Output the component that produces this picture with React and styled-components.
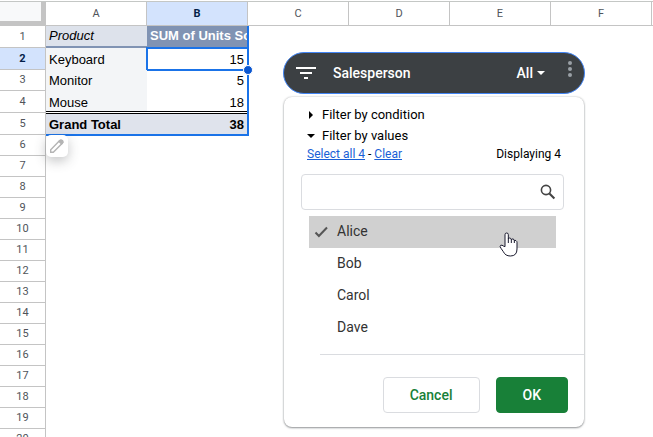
import React, { useState } from 'react';
import styled, { createGlobalStyle } from 'styled-components';

const GlobalStyle = createGlobalStyle`
  * {
    box-sizing: border-box;
  }
  body {
    margin: 0;
    background: #fff;
    font-family: Roboto, "Liberation Sans", sans-serif;
  }
  button, input {
    font-family: inherit;
  }
`;

const Page = styled.main`
  position: relative;
  height: 100vh;
  overflow: hidden;
`;

const Sheet = styled.table`
  width: 100%;
  margin-top: 1px;
  border-top: 1px solid #c4c7c5;
  border-collapse: separate;
  border-spacing: 0;
  table-layout: fixed;
  font-family: "Liberation Sans", Arial, sans-serif;
  font-size: 13px;
  line-height: 16px;
`;

const HeadCol = styled.col`
  width: 46px;
`;
const DataCol = styled.col`
  width: 101px;
`;

const Corner = styled.td`
  height: 23px;
  padding: 0;
  background: #f8f9fa;
  border-right: 5px solid #c4c4c4;
  border-bottom: 5px solid #c4c4c4;
`;

const HeadCell = styled.th`
  padding: 0;
  border-right: 1px solid #c4c4c4;
  border-bottom: 1px solid #c4c4c4;
  background: ${({ $active }) => $active ? '#d3e3fd' : '#fff'};
  color: ${({ $active }) => $active ? '#041e49' : '#50545a'};
  font-family: Roboto, sans-serif;
  font-size: 11px;
  font-weight: ${({ $active }) => $active ? 700 : 400};
`;
const ColumnHead = styled(HeadCell)`
  height: 24px;

  &:last-child {
    border-right: 0;
  }
`;
const RowHead = styled(HeadCell)`
  height: ${({ $height }) => $height}px;
`;

const Cell = styled.td`
  position: relative;
  padding: 0 4px 2px 3px;
  white-space: nowrap;
  vertical-align: bottom;
  color: #000;
`;

const FieldCell = styled(Cell)`
  padding-bottom: 4px;
  background: #dde2eb;
  font-style: italic;

  &::after {
    content: '';
    position: absolute;
    left: 0;
    right: 0;
    bottom: -1px;
    height: 3px;
    background: #8093b3;
  }
`;
const MeasureCell = styled(Cell)`
  padding-bottom: 4px;
  background: #8093b3;
  color: #fff;
  font-weight: 700;
  overflow: hidden;
`;
const LabelCell = styled(Cell)`
  background: #f3f5f7;
`;
const ValueCell = styled(Cell)`
  text-align: right;
`;
const TotalCell = styled(Cell)`
  background: #dfe3ec;
  font-weight: 700;
  text-align: ${({ $right }) => $right ? 'right' : 'left'};

  &::before {
    content: '';
    position: absolute;
    left: 0;
    right: 0;
    top: -2px;
    border-top: 3px double #000;
    background: #fff;
  }
`;

const RangeOutline = styled.span`
  position: absolute;
  top: 26px;
  left: 46px;
  width: 203px;
  height: 110px;
  border: solid #1a73e8;
  border-width: 0 2px 2px 0;
  pointer-events: none;
`;
const ActiveOutline = styled.span`
  position: absolute;
  inset: -1px;
  border: 2px solid #1a73e8;
  border-right: 0;
`;
const FillHandle = styled.span`
  position: absolute;
  top: 65px;
  left: 243px;
  width: 10px;
  height: 10px;
  border: 1px solid #fff;
  border-radius: 50%;
  background: #0b57d0;
`;

const EditButton = styled.button`
  position: absolute;
  top: 135px;
  left: 46px;
  width: 22px;
  height: 22px;
  padding: 3px;
  border: 0;
  border-radius: 5px;
  background: #fff;
  box-shadow: 0 4px 12px rgba(60, 64, 67, 0.3);

  svg {
    display: block;
  }
`;

const Slicer = styled.section`
  position: absolute;
  top: 52px;
  left: 283px;
  width: 302px;
  display: flex;
  flex-direction: column;
  gap: 3px;
`;

const SlicerBar = styled.header`
  display: flex;
  align-items: center;
  height: 42px;
  padding: 0 9px 0 12px;
  border: 1px solid #4285f4;
  border-radius: 21px;
  background: #3c4043;
  color: #fff;
  font-size: 14px;
`;
const SlicerTitle = styled.h2`
  flex: 1;
  margin: 0 0 0 17px;
  font-size: 14px;
  font-weight: 500;
  line-height: 20px;
`;
const BarButton = styled.button`
  display: flex;
  align-items: center;
  gap: 4px;
  padding: 0;
  border: 0;
  background: none;
  color: #fff;
  font-size: 14px;
  font-weight: 500;
  line-height: 20px;
`;
const MoreButton = styled(BarButton)`
  align-self: flex-start;
  margin: 7px 0 0 20px;
`;

const Panel = styled.div`
  margin: 0 1px;
  padding: 7px 0 14px;
  border-radius: 8px;
  background: #fff;
  box-shadow: 0 1px 2px rgba(60, 64, 67, 0.5), 0 0 2px rgba(60, 64, 67, 0.3);
`;

const Disclosure = styled.button`
  display: flex;
  align-items: center;
  gap: 7px;
  height: 21px;
  padding: 0 0 0 23px;
  border: 0;
  background: none;
  color: #000;
  font-size: 13px;
  line-height: 20px;
`;

const ValuesHead = styled.div`
  display: flex;
  justify-content: space-between;
  padding: 0 23px;
  color: #000;
  font-size: 12px;
  line-height: 16px;

  a {
    color: #1a5fd6;
  }
`;

const SearchBox = styled.label`
  display: flex;
  align-items: center;
  height: 36px;
  margin: 12px 20px 6px 17px;
  padding: 0 7px;
  border: 1px solid #dadce0;
  border-radius: 4px;

  input {
    flex: 1;
    min-width: 0;
    border: 0;
    outline: 0;
    font-size: 14px;
  }
`;

const ValueList = styled.ul`
  margin: 0 28px 0 25px;
  padding: 0;
  list-style: none;
`;
const ValueItem = styled.label`
  display: flex;
  align-items: center;
  gap: 8px;
  height: 32px;
  padding: 0 4px 2px;
  background: ${({ $hovered }) => $hovered ? '#d0d0d0' : 'transparent'};
  color: #333;
  font-size: 14px;
  line-height: 20px;

  input {
    position: absolute;
    opacity: 0;
  }
  svg {
    visibility: ${({ $marked }) => $marked ? 'visible' : 'hidden'};
  }
`;

const Actions = styled.footer`
  display: flex;
  justify-content: flex-end;
  gap: 16px;
  margin: 10px 0 0 36px;
  padding: 22px 16px 0 0;
  border-top: 1px solid #dadce0;
`;
const ActionButton = styled.button`
  height: 36px;
  padding: 0 26px;
  border: 1px solid ${({ $primary }) => $primary ? '#188038' : '#dadce0'};
  border-radius: 4px;
  background: ${({ $primary }) => $primary ? '#188038' : '#fff'};
  color: ${({ $primary }) => $primary ? '#fff' : '#188038'};
  font-size: 14px;
  font-weight: 500;
`;

const Pointer = styled.svg`
  position: absolute;
  top: 232px;
  left: 499px;
  pointer-events: none;
`;

const columns = ['A', 'B', 'C', 'D', 'E', 'F', ''];
const rowHeights = [22, 22, 21, 22, 22];
const products = [
  { name: 'Keyboard', units: 15 },
  { name: 'Monitor', units: 5 },
  { name: 'Mouse', units: 18 }
];
const people = ['Alice', 'Bob', 'Carol', 'Dave'];

function SheetRow ({ number, children }) {
  return (
    <tr>
      <RowHead scope='row' $height={rowHeights[number - 1] || 21} $active={number === 2}>
        {number}
      </RowHead>
      {children}
    </tr>
  );
}

function PivotSheet () {
  const total = products.reduce((sum, p) => sum + p.units, 0);
  const emptyRows = Array.from({ length: 15 }, (_, i) => i + 6);

  return (
    <Sheet>
      <colgroup>
        <HeadCol />
        {columns.slice(0, -1).map(c => <DataCol key={c} />)}
        <col />
      </colgroup>
      <thead>
        <tr>
          <Corner />
          {columns.map(c => (
            <ColumnHead key={c} scope='col' $active={c === 'B'}>{c}</ColumnHead>
          ))}
        </tr>
      </thead>
      <tbody>
        <SheetRow number={1}>
          <FieldCell>Product</FieldCell>
          <MeasureCell>SUM of Units Sold</MeasureCell>
        </SheetRow>
        {products.map((p, i) => (
          <SheetRow key={p.name} number={i + 2}>
            <LabelCell>{p.name}</LabelCell>
            <ValueCell>
              {p.units}
              {i === 0 && <ActiveOutline />}
            </ValueCell>
          </SheetRow>
        ))}
        <SheetRow number={5}>
          <TotalCell>Grand Total</TotalCell>
          <TotalCell $right>{total}</TotalCell>
        </SheetRow>
        {emptyRows.map(n => <SheetRow key={n} number={n} />)}
      </tbody>
    </Sheet>
  );
}

function FilterSlicer () {
  const [selected, setSelected] = useState(['Alice']);

  const toggle = (name) => {
    setSelected(selected.includes(name)
      ? selected.filter(s => s !== name)
      : [...selected, name]);
  };

  return (
    <Slicer>
      <SlicerBar>
        <svg width='20' height='14' viewBox='0 0 20 14' fill='#fff'>
          <path d='M0 1h20v2H0zM4 6h12v2H4zM8 11h4v2H8z' />
        </svg>
        <SlicerTitle>Salesperson</SlicerTitle>
        <BarButton type='button'>
          All
          <svg width='8' height='4' viewBox='0 0 8 4' fill='#fff'>
            <path d='M0 0h8L4 4z' />
          </svg>
        </BarButton>
        <MoreButton type='button' aria-label='More options'>
          <svg width='10' height='18' viewBox='0 0 10 18' fill='#9aa0a6'>
            <circle cx='5' cy='3' r='2' />
            <circle cx='5' cy='9' r='2' />
            <circle cx='5' cy='15' r='2' />
          </svg>
        </MoreButton>
      </SlicerBar>
      <Panel>
        <Disclosure type='button' aria-expanded='false'>
          <svg width='8' height='8' viewBox='0 0 8 8'><path d='M2 0l4 4-4 4z' /></svg>
          Filter by condition
        </Disclosure>
        <Disclosure type='button' aria-expanded='true'>
          <svg width='8' height='8' viewBox='0 0 8 8'><path d='M0 2h8L4 6z' /></svg>
          Filter by values
        </Disclosure>
        <ValuesHead>
          <span>
            <a href='#all'>Select all 4</a> - <a href='#clear'>Clear</a>
          </span>
          <span>Displaying 4</span>
        </ValuesHead>
        <SearchBox>
          <input type='text' aria-label='Search values' />
          <svg width='16' height='16' viewBox='0 0 16 16' fill='none' stroke='#444'>
            <circle cx='6' cy='6' r='4.6' strokeWidth='1.6' />
            <path d='M9.4 9.4l5 5' strokeWidth='2.1' />
          </svg>
        </SearchBox>
        <ValueList>
          {people.map(name => (
            <li key={name}>
              <ValueItem $hovered={name === 'Alice'} $marked={selected.includes(name)}>
                <input
                  type='checkbox'
                  checked={selected.includes(name)}
                  onChange={() => toggle(name)}
                />
                <svg width='16' height='16' viewBox='0 0 16 16' fill='none' stroke='#555'>
                  <path d='M2.5 9.5l3.4 3.5L14 4.5' strokeWidth='2' />
                </svg>
                {name}
              </ValueItem>
            </li>
          ))}
        </ValueList>
        <Actions>
          <ActionButton type='button'>Cancel</ActionButton>
          <ActionButton type='button' $primary>OK</ActionButton>
        </Actions>
      </Panel>
    </Slicer>
  );
}

export default function App () {
  return (
    <Page>
      <GlobalStyle />
      <PivotSheet />
      <RangeOutline />
      <FillHandle />
      <EditButton type='button' aria-label='Edit pivot table'>
        <svg width='16' height='16' viewBox='0 0 16 16' fill='none' stroke='#b4b4b4' strokeWidth='1.4'>
          <path d='M1.7 14.3v-2.6L10.7 2.6q1.3-1.2 2.6 0t0 2.6L4.3 14.3z' />
          <path d='M10 3.4l2.6 2.6 1.2-1.6-2-2z' fill='#b4b4b4' />
        </svg>
      </EditButton>
      <FilterSlicer />
      <Pointer width='20' height='26' viewBox='0 0 60 78'>
        <path
          d='M18 44V8q0-5 5-5t5 5v13q0-3 4-3t5 5q1-3 5-2t4 5q2-2 5 0t3 5v20q0 21-20 21-15 0-21-13L6 49q-5-7-1-9t8 2z'
          fill='#fff'
          stroke='#1a1a2e'
          strokeWidth='3'
          strokeLinejoin='round'
        />
        <path d='M28 20v13M37 22v11M46 25v8' stroke='#1a1a2e' strokeWidth='3' />
      </Pointer>
    </Page>
  );
}
